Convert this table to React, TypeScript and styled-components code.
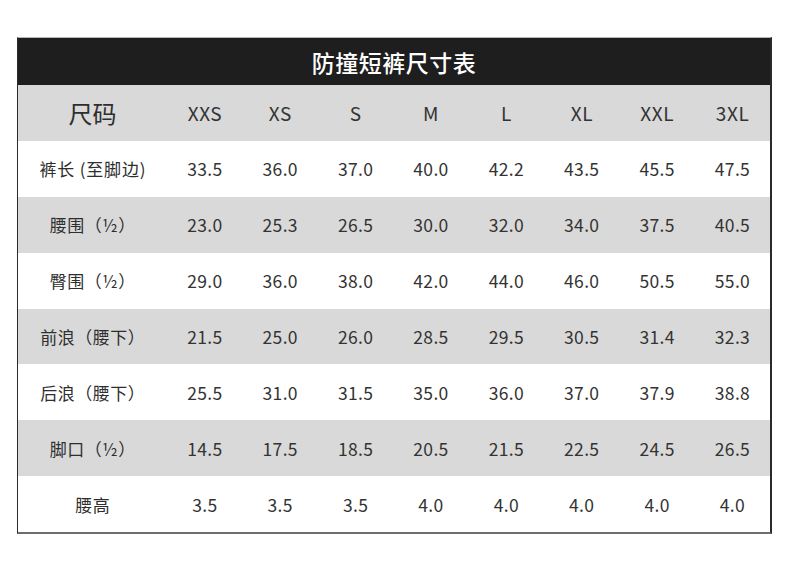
import styled, { createGlobalStyle } from 'styled-components';

const GlobalStyle = createGlobalStyle`
  html, body {
    margin: 0;
    padding: 0;
    background: #fff;
  }
  body {
    font-family: "Noto Sans CJK SC", "Noto Sans", sans-serif;
    color: #333;
  }
`;

const Page = styled.div`
  width: 790px;
  height: 565px;
  padding: 37px 0 0 17px;
  box-sizing: border-box;
`;

const Table = styled.div`
  width: 755px;
  box-sizing: border-box;
  border-left: 1px solid #2a2a2a;
  border-right: 2px solid #2a2a2a;
  border-bottom: 2px solid #6e6e6e;
  border-top: 1px solid #b5b5b5;
`;

const Title = styled.div`
  height: 47px;
  background: #1e1e1e;
  color: #fff;
  display: flex;
  align-items: center;
  justify-content: center;
  font-size: 23px;
  font-weight: 500;
  letter-spacing: 0.5px;
`;

const Row = styled.div<{ $shade?: boolean }>`
  display: grid;
  grid-template-columns: 149px repeat(8, 1fr);
  height: 55.9px;
  align-items: center;
  background: ${p => (p.$shade ? '#d9d9d9' : '#fff')};
`;

const Cell = styled.div<{ $size?: number; $spacing?: number }>`
  text-align: center;
  font-size: ${p => p.$size ?? 17.5}px;
  font-weight: 400;
  letter-spacing: ${p => p.$spacing ?? 0.3}px;
  padding-left: ${p => p.$spacing ?? 0.3}px;
  color: #333;
  white-space: nowrap;
`;

const Label = styled(Cell)`
  color: #2e2e2e;
`;

const sizes = ['XXS', 'XS', 'S', 'M', 'L', 'XL', 'XXL', '3XL'];

const rows: [string, string[]][] = [
  ['裤长 (至脚边)', ['33.5', '36.0', '37.0', '40.0', '42.2', '43.5', '45.5', '47.5']],
  ['腰围（½）', ['23.0', '25.3', '26.5', '30.0', '32.0', '34.0', '37.5', '40.5']],
  ['臀围（½）', ['29.0', '36.0', '38.0', '42.0', '44.0', '46.0', '50.5', '55.0']],
  ['前浪（腰下）', ['21.5', '25.0', '26.0', '28.5', '29.5', '30.5', '31.4', '32.3']],
  ['后浪（腰下）', ['25.5', '31.0', '31.5', '35.0', '36.0', '37.0', '37.9', '38.8']],
  ['脚口（½）', ['14.5', '17.5', '18.5', '20.5', '21.5', '22.5', '24.5', '26.5']],
  ['腰高', ['3.5', '3.5', '3.5', '4.0', '4.0', '4.0', '4.0', '4.0']],
];

export default function App() {
  return (
    <Page>
      <GlobalStyle />
      <Table>
        <Title>防撞短裤尺寸表</Title>
        <Row $shade>
          <Label $size={24} $spacing={0}>尺码</Label>
          {sizes.map(s => (
            <Cell key={s} $size={19} $spacing={0.6}>{s}</Cell>
          ))}
        </Row>
        {rows.map(([name, vals], i) => (
          <Row key={name} $shade={i % 2 === 1}>
            <Label $size={17} $spacing={i === 0 ? 0.8 : 0.5}>{name}</Label>
            {vals.map((v, j) => (
              <Cell key={j}>{v}</Cell>
            ))}
          </Row>
        ))}
      </Table>
    </Page>
  );
}
